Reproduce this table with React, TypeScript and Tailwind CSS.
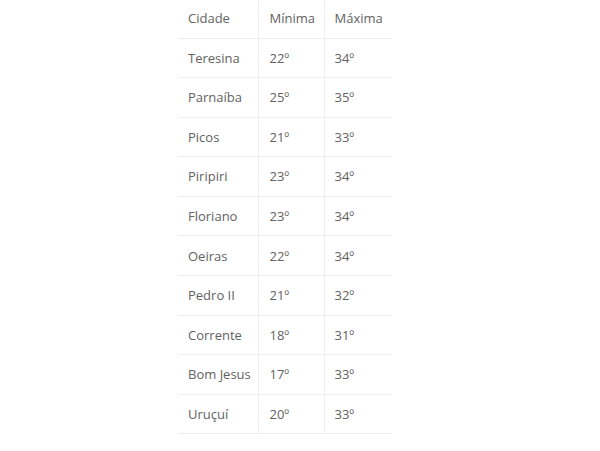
import React from "react";

const rows: [string, string, string][] = [
  ["Teresina", "22º", "34º"],
  ["Parnaíba", "25º", "35º"],
  ["Picos", "21º", "33º"],
  ["Piripiri", "23º", "34º"],
  ["Floriano", "23º", "34º"],
  ["Oeiras", "22º", "34º"],
  ["Pedro II", "21º", "32º"],
  ["Corrente", "18º", "31º"],
  ["Bom Jesus", "17º", "33º"],
  ["Uruçuí", "20º", "33º"],
];

const App: React.FC = () => {
  return (
    <div className="w-[600px] h-[451px] bg-white overflow-hidden font-['Open_Sans',sans-serif] text-[13px] text-[#626262]">
      <table className="ml-[178px] w-[214px] table-fixed border-collapse -mt-[1px] whitespace-nowrap">
        <colgroup>
          <col className="w-[80px]" />
          <col className="w-[66px]" />
          <col className="w-[68px]" />
        </colgroup>
        <thead>
          <tr className="h-[39px] border-b border-[#eeeeee]">
            <th className="px-[10px] text-left font-normal">Cidade</th>
            <th className="px-[11px] text-left font-normal border-l border-[#eeeeee]">Mínima</th>
            <th className="px-[10px] text-left font-normal border-l border-[#eeeeee]">Máxima</th>
          </tr>
        </thead>
        <tbody>
          {rows.map((r, i) => (
            <tr key={i} className="h-[39.6px] border-b border-[#eeeeee]">
              <td className="px-[10px] pt-[1px]">{r[0]}</td>
              <td className="px-[11px] pt-[1px] border-l border-[#eeeeee]">{r[1]}</td>
              <td className="px-[10px] pt-[1px] border-l border-[#eeeeee]">{r[2]}</td>
            </tr>
          ))}
        </tbody>
      </table>
    </div>
  );
};

export default App;
